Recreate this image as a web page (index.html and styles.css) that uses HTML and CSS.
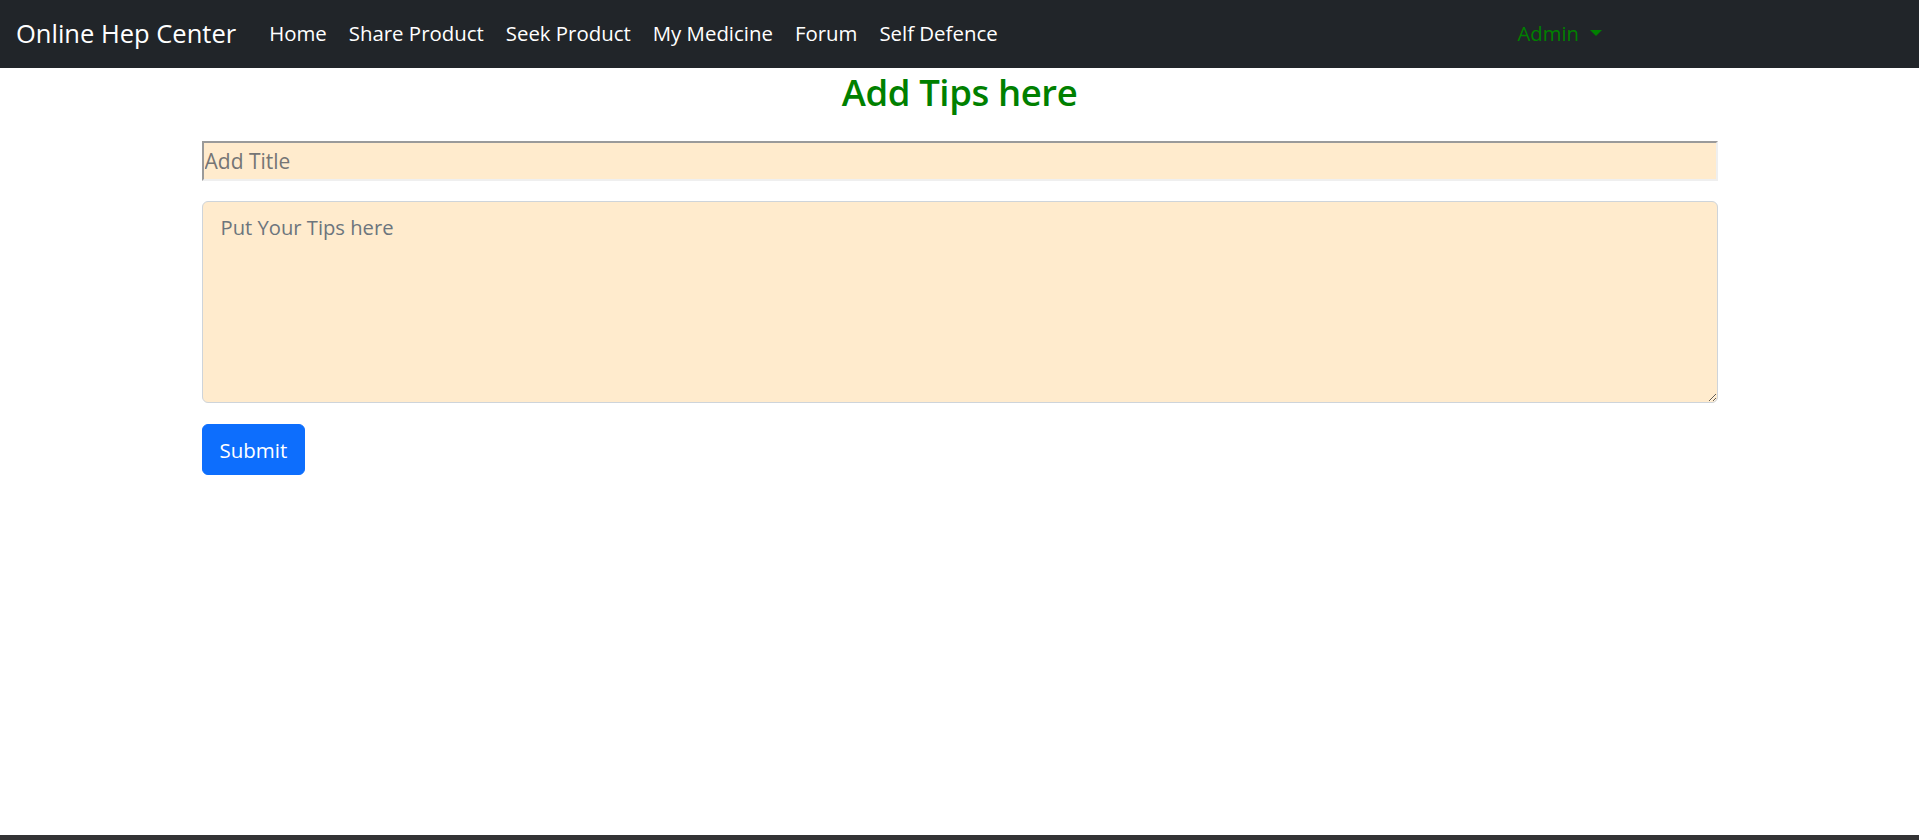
FILE: index.html
```html
<!DOCTYPE html>
<html lang="en">
<head>
<meta charset="utf-8">
<title>Online Hep Center - Add Tips</title>
<link rel="stylesheet" href="styles.css">
</head>
<body>
<div class="page">
  <nav class="navbar">
    <a class="brand" href="#">Online Hep Center</a>
    <ul class="nav-links">
      <li><a href="#">Home</a></li>
      <li><a href="#">Share Product</a></li>
      <li><a href="#">Seek Product</a></li>
      <li><a href="#">My Medicine</a></li>
      <li><a href="#">Forum</a></li>
      <li><a href="#">Self Defence</a></li>
    </ul>
    <div class="user">
      <a href="#" class="user-toggle">Admin<span class="caret"></span></a>
    </div>
  </nav>
  <main class="container">
    <h2 class="title">Add Tips here</h2>
    <form class="tip-form">
      <input type="text" class="title-input" placeholder="Add Title">
      <textarea class="tips-input" placeholder="Put Your Tips here"></textarea>
      <button type="button" class="btn-submit">Submit</button>
    </form>
  </main>
  <div class="bottom-bar"></div>
</div>
</body>
</html>
```
FILE: styles.css
```css
* { box-sizing: border-box; }
html, body { margin: 0; padding: 0; }
body {
  font-family: "Open Sans", "Noto Sans", sans-serif;
  color: #212529;
  background: #fff;
}
.page {
  min-height: 100vh;
  display: flex;
  flex-direction: column;
}
.navbar {
  height: 68px;
  background: #212529;
  display: flex;
  align-items: center;
  padding: 0 16px 2px;
}
.brand {
  font-size: 25.5px;
  color: #fff;
  text-decoration: none;
  margin-right: 22px;
}
.nav-links {
  list-style: none;
  display: flex;
  margin: 0;
  padding: 0;
  flex: 1;
}
.nav-links a {
  display: block;
  color: #fff;
  text-decoration: none;
  font-size: 20.4px;
  padding: 8px 11px;
}
.user { margin-right: 301px; }
.user-toggle {
  color: #008000;
  text-decoration: none;
  font-size: 20.3px;
  display: flex;
  align-items: center;
}
.caret {
  display: inline-block;
  margin-left: 11px;
  width: 0;
  height: 0;
  border-left: 6px solid transparent;
  border-right: 6px solid transparent;
  border-top: 6px solid #008000;
}
.container {
  width: 1516px;
  margin: 0 auto;
}
.title {
  margin: 1px 0 25px;
  text-align: center;
  color: #008000;
  font-size: 36.5px;
  font-weight: 600;
  line-height: 47px;
  letter-spacing: -0.4px;
}
.tip-form {
  display: flex;
  flex-direction: column;
  align-items: flex-start;
}
.title-input {
  width: 100%;
  height: 40px;
  background: #ffebcd;
  border-style: solid;
  border-width: 2px;
  border-color: #9a9a9a #efefef #efefef #9a9a9a;
  padding: 1px;
  font-family: inherit;
  font-size: 21px;
  color: #212529;
  outline: none;
}
.title-input::placeholder { color: #757575; }
.tips-input {
  width: 100%;
  height: 202px;
  margin-top: 20px;
  background: #ffebcd;
  border: 1px solid #ced4da;
  border-radius: 6px;
  padding: 10px 18px 9px;
  font-family: inherit;
  font-size: 20.2px;
  line-height: 1.5;
  color: #212529;
  resize: vertical;
  outline: none;
}
.tips-input::placeholder { color: #6c757d; }
.btn-submit {
  margin-top: 21px;
  background: #0d6efd;
  border: 1px solid #0d6efd;
  border-radius: 6px;
  color: #fff;
  font-family: inherit;
  font-size: 20.5px;
  line-height: 30px;
  padding: 9.5px 17px;
  cursor: pointer;
}
.bottom-bar {
  margin-top: auto;
  height: 5px;
  background: #333335;
}
```
